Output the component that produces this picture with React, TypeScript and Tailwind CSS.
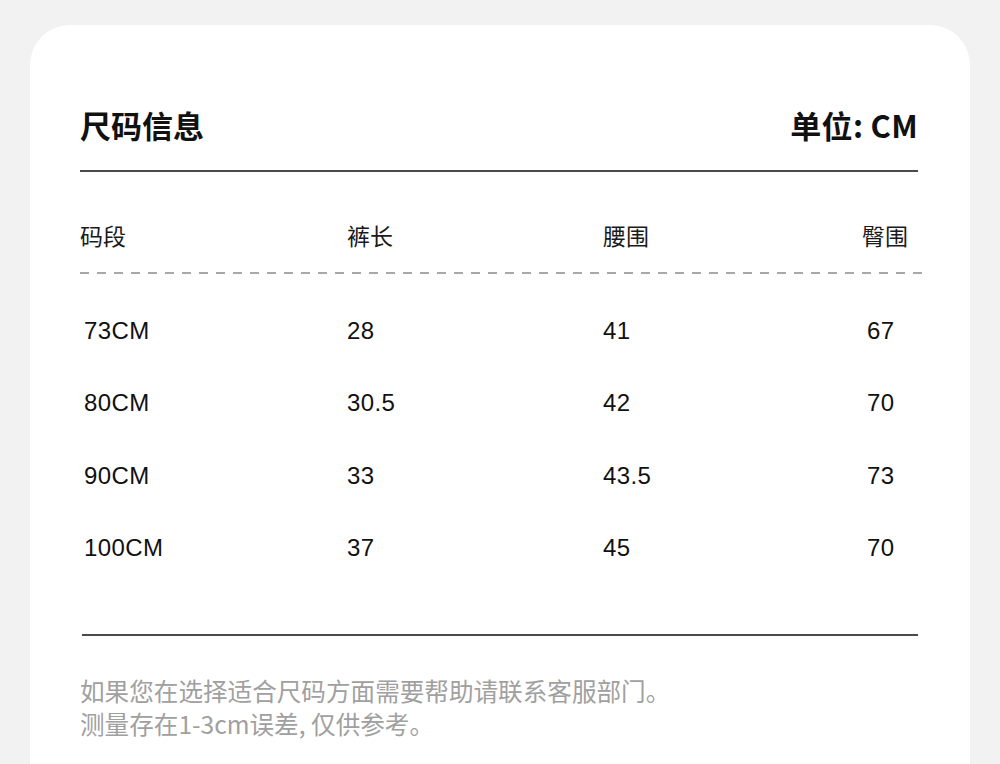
import React from "react";

const rows = [
  ["73CM", "28", "41", "67"],
  ["80CM", "30.5", "42", "70"],
  ["90CM", "33", "43.5", "73"],
  ["100CM", "37", "45", "70"],
];

export default function App() {
  return (
    <div
      className="w-[1000px] h-[764px] overflow-hidden bg-[#f2f2f2] pt-[25px] px-[30px]"
      style={{ fontFamily: '"Liberation Sans", "Noto Sans CJK SC", sans-serif' }}
    >
      <div className="bg-white rounded-[40px] h-[800px] pl-[50px] pr-[52px] pt-[80px]">
        <div className="flex items-center justify-between h-[40px] text-[31px] font-bold text-[#111] leading-[40px]" style={{ fontFamily: '"Noto Sans CJK SC", sans-serif' }}>
          <span>尺码信息</span>
          <span className="tracking-[0.3px]">单位: CM</span>
        </div>
        <div className="mt-[25px] h-[2px] bg-[#4a4a4a]" />
        <div className="mt-[47px] grid grid-cols-[267px_256px_259px_1fr] h-[32px] items-center text-[23px] leading-[32px] text-[#1a1a1a]" style={{ fontFamily: '"Noto Sans CJK SC", sans-serif' }}>
          <span>码段</span>
          <span>裤长</span>
          <span>腰围</span>
          <span>臀围</span>
        </div>
        <div className="mt-[21px] h-[2px] bg-[repeating-linear-gradient(to_right,#a8a8a8_0px,#a8a8a8_9px,transparent_9px,transparent_17px)] w-[842px]" />
        <div className="mt-[21px]">
          {rows.map((r, i) => (
            <div key={i} className="grid grid-cols-[267px_256px_264px_1fr] h-[72.3px] items-center text-[24px] tracking-[0.4px] text-[#111]">
              <span className="pl-[4px]">{r[0]}</span>
              <span>{r[1]}</span>
              <span>{r[2]}</span>
              <span>{r[3]}</span>
            </div>
          ))}
        </div>
        <div className="mt-[50px] ml-[2px] h-[2px] bg-[#4a4a4a]" />
        <div className="mt-[38px] text-[24.6px] leading-[33px] text-[#a0a0a0]" style={{ fontFamily: '"Noto Sans CJK SC", sans-serif' }}>
          <div>如果您在选择适合尺码方面需要帮助请联系客服部门。</div>
          <div>测量存在1-3cm误差, 仅供参考。</div>
        </div>
      </div>
    </div>
  );
}
